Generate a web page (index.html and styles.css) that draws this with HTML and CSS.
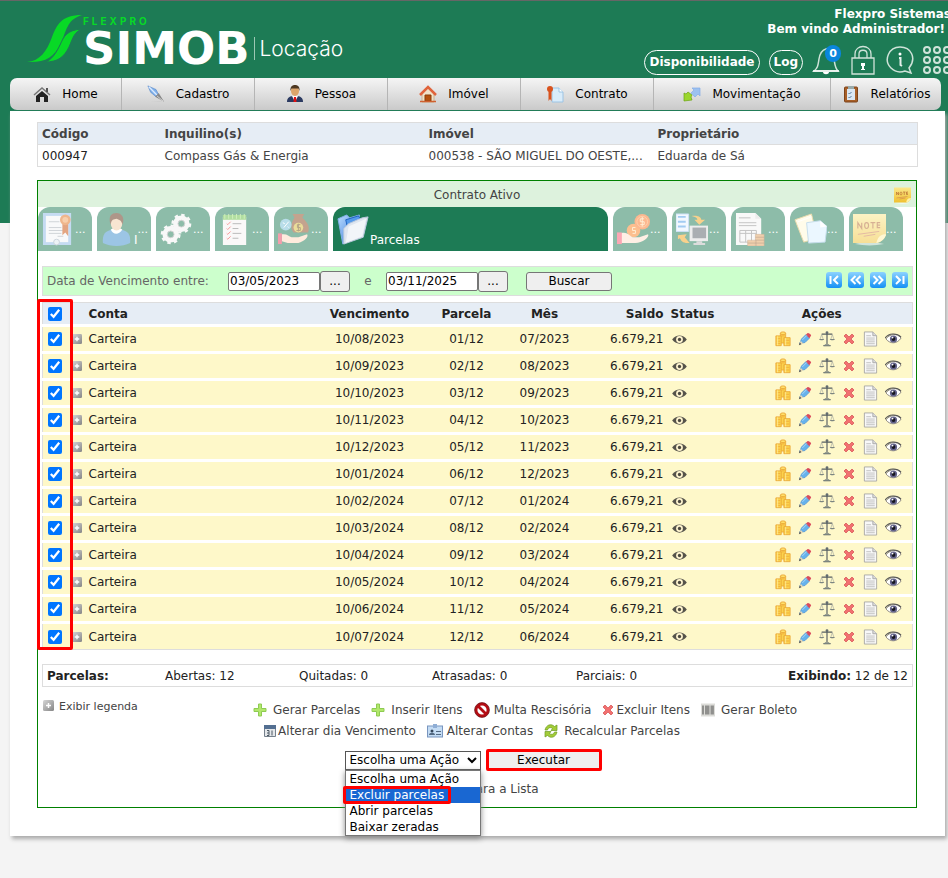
FILE: index.html
```html
<!DOCTYPE html>
<html lang="pt-BR">
<head>
<meta charset="utf-8">
<title>SIMOB Locação - Parcelas</title>
<link rel="stylesheet" href="styles.css">
</head>
<body>
<svg class="sprite" aria-hidden="true">
  <defs>
    <linearGradient id="g-blue" x1="0" y1="0" x2="0" y2="1"><stop offset="0" stop-color="#8cd3ff"/><stop offset="1" stop-color="#1490f5"/></linearGradient>
    <linearGradient id="g-grey" x1="0" y1="0" x2="1" y2="1"><stop offset="0" stop-color="#d6d6d6"/><stop offset="1" stop-color="#858585"/></linearGradient>
    <linearGradient id="g-note" x1="0" y1="0" x2="0" y2="1"><stop offset="0" stop-color="#fbe88b"/><stop offset="1" stop-color="#f0c030"/></linearGradient>
    <linearGradient id="g-folder" x1="0" y1="0" x2="1" y2="1"><stop offset="0" stop-color="#b9dcff"/><stop offset="1" stop-color="#2c6fd6"/></linearGradient>
  </defs>
  <symbol id="home" viewBox="0 0 18 18"><path d="M1 10 9 3l8 7" fill="none" stroke="#777" stroke-width="1.500"/><path d="M13 3h2v4h-2z" fill="#555"/><path d="M3 11l6-5 6 5v6h-4v-5H7v5H3z" fill="#222"/></symbol>
  <symbol id="pen" viewBox="0 0 20 20"><path d="M4 18h14l-4 1z" fill="#ccc"/><path d="M1 1l9 4 3 6-3 2-6-5z" fill="#7fb0ea" stroke="#5c8acb" stroke-width=".7"/><path d="M2 2l9 9" stroke="#dcebff" stroke-width="1.500"/><path d="M9 13l4-4 6 9.500z" fill="#888"/><path d="M11 12l7 6" stroke="#ddd"/></symbol>
  <symbol id="person" viewBox="0 0 18 18"><path d="M1 17c0-5 3-6 8-6s8 1 8 6z" fill="#2b3a61"/><path d="M6 11l3 6 3-6z" fill="#fff"/><path d="M8 12h2l.5 5h-3z" fill="#e01010"/><ellipse cx="9" cy="6" rx="4" ry="5" fill="#dca56b"/><path d="M4.500 6C4 2 6 0 9 0s5 2 4.500 6l-1-2.500h-7z" fill="#4c3720"/></symbol>
  <symbol id="house" viewBox="0 0 18 18"><path d="M3 9l6-6 6 6v8H3z" fill="#f0e2c8" stroke="#c9b18e"/><path d="M1 10l8-8 8 8" fill="none" stroke="#e0643c" stroke-width="2.500"/><path d="M6 10h6v6H6z" fill="#b5520f" stroke="#8b3c08"/><path d="M1 16.500h16" stroke="#d06030" stroke-width="1.500"/></symbol>
  <symbol id="contract" viewBox="0 0 18 18"><path d="M6 3h7l4 4v10H6z" fill="#d9ecfa" stroke="#9cc4e4"/><path d="M13 3v4h4" fill="#fff" stroke="#9cc4e4"/><circle cx="4" cy="4" r="3" fill="#d9531e"/><path d="M2.500 6h3v10l-1.500-2-1.500 2z" fill="#d9531e"/></symbol>
  <symbol id="move" viewBox="0 0 18 18"><path d="M9 3h8v8l-2-2-3 3-4-4 3-3z" fill="#9cc1f0" stroke="#84aee8" stroke-width=".7"/><path d="M1 8l2 1 2-2 4 3-1 2 1 3-8 1z" fill="#9bd62d" stroke="#6ba313" stroke-width=".7"/></symbol>
  <symbol id="clip" viewBox="0 0 16 18"><rect x="1.500" y="2" width="13" height="15" rx="1" fill="#a85f27" stroke="#7c431a"/><path d="M4 4h8v11H4z" fill="#dbe7f2"/><path d="M5 1h6v3H5z" fill="#9aa"/><path d="M5.500 8l1 1 2-2M5.500 12l1 1 2-2" fill="none" stroke="#56789b"/></symbol>

  <symbol id="logo" viewBox="0 0 56 48"><path d="M55 0C34 0 30 10 25 22 20 36 13 46 0 47c18 1 27-5 33-17C40 16 39 5 55 0z" fill="#08d926"/><path d="M55 14C40 15 37 21 33 30c-4 8-8 15-15 17 13 0 19-5 24-15 4-9 5-15 13-18z" fill="#08d926" stroke="#1d7b55"/></symbol>
  <symbol id="bell" viewBox="0 0 28 30"><path d="M2 26c4-3 4-6 5-12 1-6 3-9 7-10s7 4 8 10 1 9 4 12z" fill="none" stroke="#cfe3d9" stroke-width="1.500"/><path d="M1 26h26" stroke="#fff" stroke-width="1.500"/><path d="M11 27h6c0 3-6 3-6 0z" fill="#fff"/></symbol>
  <symbol id="lock" viewBox="0 0 24 30"><path d="M1 13h22v16H1zM4 13V9c0-10 16-10 16 0v4M8 13V9c0-5 8-5 8 0v4" fill="none" stroke="#cfe3d9" stroke-width="1.300"/><path d="M10 18h4v3h-1v3h1v1h-4v-1h1v-3h-1z" fill="#fff"/></symbol>
  <symbol id="info" viewBox="0 0 28 28"><path d="M23 22C31 12 25 1 14 1S-3 14 5 22c5 5 11 4 14 3l6 2z" fill="none" stroke="#cfe3d9" stroke-width="1.500"/><circle cx="14" cy="8" r="1.500" fill="#fff"/><path d="M13 12h1.500v7l1.500 1" fill="none" stroke="#e4f0ea" stroke-width="2"/></symbol>
  <symbol id="apps" viewBox="0 0 28 28"><g fill="none" stroke="#cfe3d9" stroke-width="2"><circle cx="4" cy="4" r="3"/><circle cx="14" cy="4" r="3"/><circle cx="24" cy="4" r="3"/><circle cx="4" cy="14" r="3"/><circle cx="14" cy="14" r="3"/><circle cx="24" cy="14" r="3"/><circle cx="4" cy="24" r="3"/><circle cx="14" cy="24" r="3"/><circle cx="24" cy="24" r="3"/></g></symbol>

  <symbol id="note" viewBox="0 0 34 34"><path d="M2 32c8-2 20-2 30 0-10 2-20 2-30 0z" fill="#fff" opacity=".6"/><path d="M0 1h34v22c-2 4-5 7-9 8H0z" fill="url(#g-note)"/><path d="M34 22c-4 0-8 1-10 9 5-1 9-4 10-9z" fill="#fff0a8"/><path d="M5 16v-6l4 6v-6M12 13a2 3 0 1 0 4 0 2 3 0 1 0-4 0M18 10h5M20.500 10v6M28 10h-3v5h3M25 12.500h3" fill="none" stroke="#b0632c" stroke-width="1.200"/><path d="M5 22l22-3M11 24l12-2" stroke="#c9764a" fill="none"/></symbol>
  <symbol id="t-cert" viewBox="0 0 34 34"><path d="M1 0h29v33H1z" fill="#8db9e6"/><path d="M4 3h23v27H4z" fill="#f3f5f7"/><path d="M7 9h11M7 15h13M7 18h15M7 21h13M16 24h6" stroke="#a0a8b0"/><circle cx="15" cy="30" r="3" fill="#dde8ef" stroke="#9ab"/><path d="M21 10h6v14l-3-4-3 3z" fill="#c94d08"/><circle cx="24" cy="7" r="5.500" fill="#e0701c"/><circle cx="24" cy="7" r="3" fill="#f3a15c"/></symbol>
  <symbol id="t-user" viewBox="0 0 34 34"><path d="M2 31c-1-10 3-14 14-14s15 4 14 14c-8 4-20 4-28 0z" fill="#3c8dcc"/><path d="M10 17c3 6 8 6 12 0l-4-2h-4z" fill="#fff"/><ellipse cx="16" cy="10" rx="6" ry="8" fill="#f2cda5"/><path d="M10 12C7 3 11 0 16 0s9 5 6 12c-1-5-4-5-6-6-3 1-5 0-6 6z" fill="#603015"/></symbol>
  <symbol id="t-gears" viewBox="0 0 34 34"><g fill="none" stroke="#f2f2f2"><circle cx="22" cy="11" r="6" stroke-width="5"/><circle cx="22" cy="11" r="9" stroke-width="2.500" stroke-dasharray="3.500 3.500"/><circle cx="11" cy="22" r="6" stroke-width="5"/><circle cx="11" cy="22" r="9" stroke-width="2.500" stroke-dasharray="3.500 3.500"/></g><g fill="none" stroke="#aaa"><circle cx="22" cy="11" r="3.500"/><circle cx="11" cy="22" r="3.500"/></g></symbol>
  <symbol id="t-list" viewBox="0 0 34 34"><path d="M4 4h24v29H4z" fill="#f6f2f2"/><path d="M4 2h24v5H4z" fill="#66bf44"/><path d="M6 1v5M10 1v5M14 1v5M18 1v5M22 1v5M26 1v5" stroke="#a0e080"/><path d="M8 11l1 1 3-3M8 16l1 1 3-3M8 21l1 1 3-3M8 26l1 1 3-3" fill="none" stroke="#ef3030"/><path d="M14 11h9M14 16h6M14 21h9M14 26h6" stroke="#777"/></symbol>
  <symbol id="t-bag" viewBox="0 0 34 34"><path d="M17 5l-2-4h12l-2 4c6 5 8 10 6 15H16c-4-5-2-11 1-15z" fill="#8a4a20"/><circle cx="21" cy="15" r="5" fill="#d7bd37"/><path d="M23 12h-3v3h3v3h-4M21 11v8" fill="none" stroke="#6d4a11"/><circle cx="8" cy="12" r="6" fill="#74bdd5"/><path d="M6 15l5-6M5 10l2 1M10 14l1 1" stroke="#fff"/><path d="M4 22c5-1 7 2 10 3h7l9-3c2 3-3 7-9 9H10l-6-2z" fill="#ffd8bd"/><path d="M0 21h4v11H0z" fill="#e8405c"/></symbol>
  <symbol id="t-folder" viewBox="0 0 34 34"><path d="M1 6l9-4 3 3 10-3v20l-17 10z" fill="url(#g-folder)" stroke="#83b0e8"/><path d="M9 7l13-4 4 6-15 7z" fill="#549aec" stroke="#1e62c0"/><path d="M7 16l5-5 14-6 6-1-5 21-20 7z" fill="#dfe6f0" stroke="#b9c8dc"/><path d="M12 14l18-8-4 18-17 7z" fill="#fff" opacity=".6"/></symbol>
  <symbol id="t-coins" viewBox="0 0 34 34"><circle cx="17" cy="18" r="7" fill="#fb8122"/><circle cx="26" cy="9" r="8" fill="#fa7423"/><circle cx="26" cy="9" r="5.500" fill="none" stroke="#ffa35b"/><path d="M28 6h-4v3h4v3h-4M26 4v10M19 15h-3v3h3v3h-3" fill="none" stroke="#ffe0ad"/><path d="M4 21c6-2 8 2 12 4h7l9-3c2 3-6 9-13 9H4z" fill="#ffe1cc"/><path d="M0 20h5v12H0z" fill="#f8526c"/></symbol>
  <symbol id="t-sync" viewBox="0 0 34 34"><path d="M0 1h13v18H0z" fill="#e8f3ff" stroke="#9cc4f0"/><path d="M2 4h8M2 9h8M2 14h8" stroke="#4899e6" stroke-width="2"/><path d="M16 3c8-1 10 2 10 4h4l-6 5-5-5h3c0-2-2-3-6-4z" fill="#f3a51b"/><path d="M2 23l9-1-2 3 5 6c-6 0-8-1-10-5l-2 1z" fill="#f3a51b"/><path d="M14 13h19v16H14z" fill="#ddd"/><path d="M17 15h14v11H17z" fill="#586068"/><path d="M21 29h6v2h3v2H18v-2h3z" fill="#bbb"/></symbol>
  <symbol id="t-doc" viewBox="0 0 34 34"><path d="M1 0h20l6 6v27H1z" fill="#f4f4f4"/><path d="M21 0v6h6" fill="#ddd"/><path d="M4 5h12M4 10h18M4 13h18M5 18h17v12H5zM11 18v12M17 18v12M5 21h17" fill="none" stroke="#888"/><g fill="#e2a05b" stroke="#9c6635" stroke-width=".5"><path d="M13 28h9v3h-9zM13 31h9v3h-9zM21 22h9v3h-9zM21 25h9v3h-9zM21 28h9v3h-9zM21 31h9v3h-9z"/></g></symbol>
  <symbol id="t-pages" viewBox="0 0 34 34"><path d="M1 7L18 1l6 25-14 4z" fill="#fffbd6" stroke="#d7b95e"/><path d="M4 9l14-5" stroke="#fff"/><path d="M13 10l14-2 7 6-2 16-17 1z" fill="#d9f1ff" stroke="#8cbcd9"/><path d="M27 8v7l7-1z" fill="#fff"/></symbol>

  <symbol id="plusbox" viewBox="0 0 11 11"><rect width="11" height="11" rx="1.500" fill="url(#g-grey)"/><path d="M5.500 3v5M3 5.500h5" stroke="#fff" stroke-width="1.500"/></symbol>
  <symbol id="eye" viewBox="0 0 18 12"><path d="M1 6c4-6 12-6 16 0-4 6-12 6-16 0z" fill="#55534a"/><circle cx="9" cy="6" r="3.700" fill="#fff5cf"/><circle cx="9" cy="6" r="1.800" fill="#4c4a40"/></symbol>
  <symbol id="coins" viewBox="0 0 18 18"><g fill="#fbd34c" stroke="#eba93a"><path d="M6 2.500h6v11H6z"/><path d="M1 5.500h6v11H1z"/><path d="M10 7.500h7v9h-7z"/></g><path d="M2 8.500h4M2 11.500h4M2 14h4M11 10.500h5M11 13.500h5M7 5.500h4" stroke="#f2ae3c"/><path d="M3 6v10M12 8v8" stroke="#ffeb99"/><ellipse cx="9" cy="2.500" rx="3" ry="1.500" fill="#ffe16a" stroke="#eba93a"/></symbol>
  <symbol id="pencil" viewBox="0 0 16 16"><path d="M2 13l2-5 5-5 4 4-5 5z" fill="#65b2ec" stroke="#5b9cd6"/><path d="M9 3l2-2c2 0 4 2 4 3l-2 3z" fill="#d94b5d"/><path d="M5 9l5-5" stroke="#b2dcfa"/><path d="M2 14l1-4 3 3z" fill="#efdbb2"/><path d="M1 15l1-3 2 2z" fill="#555"/></symbol>
  <symbol id="scale" viewBox="0 0 18 18"><path d="M9 2v13M3 3.500h12M5 16.500h8" stroke="#555d61" stroke-width="1.300"/><path d="M3 4L1 10M3 4l2 6M15 4l-2 6M15 4l2 6" stroke="#a0a59c" stroke-width=".7"/><path d="M0 9h6c-1 2-5 2-6 0zM12 9h6c-1 2-5 2-6 0zM7 15h4l2 2H5z" fill="#7c8580"/><circle cx="9" cy="2" r="1.600" fill="#636c70"/></symbol>
  <symbol id="cross" viewBox="0 0 12 12"><path d="M1 3l2-2 3 3 3-3 2 2-3 3 3 3-2 2-3-3-3 3-2-2 3-3z" fill="#f27070" stroke="#d85a5a" stroke-width=".8"/></symbol>
  <symbol id="doc" viewBox="0 0 15 17"><path d="M1 1h9l4 4v11H1z" fill="#f8f8f8" stroke="#aaaaa6"/><path d="M10 1v4h4" fill="#ddd" stroke="#aaa"/><path d="M3 5h5M3 7.500h9M3 9.500h9M3 11.500h9M3 13.500h9" stroke="#c0c0c0"/></symbol>
  <symbol id="view" viewBox="0 0 18 12"><path d="M1 6c3-5 12-7 16-1-4 6-11 7-16 1z" fill="#fff" stroke="#8a867c"/><path d="M0 5c4-5 12-6 17-1" fill="none" stroke="#555" stroke-width="1.200"/><circle cx="9" cy="6" r="3.800" fill="#62628a"/><circle cx="9" cy="6" r="2" fill="#171720"/><circle cx="8" cy="4.500" r="1" fill="#fff"/></symbol>
  <symbol id="first" viewBox="0 0 16 16"><rect width="16" height="16" rx="3" fill="url(#g-blue)"/><path d="M4.500 4v8M12 4L8 8l4 4" fill="none" stroke="#fff" stroke-width="2"/></symbol>
  <symbol id="prev" viewBox="0 0 16 16"><rect width="16" height="16" rx="3" fill="url(#g-blue)"/><path d="M7.500 4l-4 4 4 4M12.500 4l-4 4 4 4" fill="none" stroke="#fff" stroke-width="2"/></symbol>
  <symbol id="next" viewBox="0 0 16 16"><rect width="16" height="16" rx="3" fill="url(#g-blue)"/><path d="M3.500 4l4 4-4 4M8.500 4l4 4-4 4" fill="none" stroke="#fff" stroke-width="2"/></symbol>
  <symbol id="last" viewBox="0 0 16 16"><rect width="16" height="16" rx="3" fill="url(#g-blue)"/><path d="M11.500 4v8M4 4l4 4-4 4" fill="none" stroke="#fff" stroke-width="2"/></symbol>
  <symbol id="add" viewBox="0 0 14 14"><path d="M5.500 1h3v4.500H13v3H8.500V13h-3V8.500H1v-3h4.500z" fill="#b2e86c" stroke="#8ecb52"/></symbol>
  <symbol id="ban" viewBox="0 0 16 16"><circle cx="8" cy="8" r="6" fill="#fff" stroke="#b40d14" stroke-width="2.800"/><path d="M4 4l8 8" stroke="#b40d14" stroke-width="2.800"/><circle cx="8" cy="8" r="7.400" fill="none" stroke="#641014" stroke-width=".7"/></symbol>
  <symbol id="bars" viewBox="0 0 14 13"><path d="M0 0h14v13H0z" fill="#dcdcd8"/><path d="M2 2v9M5 2v9M7 2v9M11 2v9" stroke="#444"/><path d="M9 2v9M12.500 2v9" stroke="#777" stroke-width=".7"/></symbol>
  <symbol id="cal" viewBox="0 0 12 12"><path d="M.500 1h11v10.500H.500z" fill="#e4e7ea" stroke="#75808b"/><path d="M0 0h12v4H0z" fill="#536f91"/><path d="M3 5.500h2v5H3M3 8h2M8 5.500v5" fill="none" stroke="#4d5964"/></symbol>
  <symbol id="card" viewBox="0 0 16 14"><rect x=".500" y="2" width="15" height="11" fill="#c4dcf4" stroke="#7895bf"/><path d="M6 0h4v4H6z" fill="#8faed5"/><circle cx="5" cy="7" r="1.500" fill="#33465c"/><path d="M2 11c0-3 6-3 6 0zM9 7h5v1H9zM9 10h5v1H9z" fill="#526982"/></symbol>
  <symbol id="recycle" viewBox="0 0 14 14"><path d="M1 6C2 1 7-1 10.500 2.500L13 1v5.500H7L8.500 4.500C7 3 4 3.500 3.500 6zM13 8c-1 5-6 7-9.500 3.500L1 13V7.500h6L5.500 9.500C7 11 10 10.500 10.500 8z" fill="#a3cc38" stroke="#6b9b22" stroke-width=".7"/></symbol>
</svg>

<header class="header">
  <div class="brand">
    <svg class="brand-mark"><use href="#logo"/></svg>
    <div class="brand-text"><span class="brand-small">FLEXPRO</span><span class="brand-name">SIMOB</span></div>
    <span class="brand-module">Locação</span>
  </div>
  <div class="account">
    <div class="account-company">Flexpro Sistemas</div>
    <div class="account-user">Bem vindo Administrador!</div>
    <div class="tools">
      <button class="pill" type="button">Disponibilidade</button>
      <button class="pill" type="button">Log</button>
      <a class="tool tool-bell" href="#" aria-label="Notificações"><svg><use href="#bell"/></svg><span class="badge">0</span></a>
      <a class="tool tool-lock" href="#" aria-label="Bloquear"><svg><use href="#lock"/></svg></a>
      <a class="tool" href="#" aria-label="Informações"><svg><use href="#info"/></svg></a>
      <a class="tool tool-apps" href="#" aria-label="Aplicativos"><svg><use href="#apps"/></svg></a>
    </div>
  </div>
</header>

<nav class="menu">
  <a href="#"><svg><use href="#home"/></svg>Home</a>
  <a href="#"><svg><use href="#pen"/></svg>Cadastro</a>
  <a href="#"><svg><use href="#person"/></svg>Pessoa</a>
  <a href="#"><svg><use href="#house"/></svg>Imóvel</a>
  <a href="#"><svg><use href="#contract"/></svg>Contrato</a>
  <a href="#"><svg><use href="#move"/></svg>Movimentação</a>
  <a href="#"><svg><use href="#clip"/></svg>Relatórios</a>
</nav>

<main class="page">
  <table class="summary">
    <thead><tr><th class="s-code">Código</th><th class="s-tenant">Inquilino(s)</th><th class="s-place">Imóvel</th><th>Proprietário</th></tr></thead>
    <tbody><tr><td>000947</td><td>Compass Gás &amp; Energia</td><td>000538 - SÃO MIGUEL DO OESTE,...</td><td>Eduarda de Sá</td></tr></tbody>
  </table>

  <section class="contract">
    <div class="contract-head"><span>Contrato Ativo</span><svg><use href="#note"/></svg></div>
    <div class="tabs">
      <button type="button" class="tab"><svg><use href="#t-cert"/></svg><span>...</span></button>
      <button type="button" class="tab"><svg><use href="#t-user"/></svg><b>I</b><span>...</span></button>
      <button type="button" class="tab"><svg><use href="#t-gears"/></svg><span>...</span></button>
      <button type="button" class="tab"><svg><use href="#t-list"/></svg><span>...</span></button>
      <button type="button" class="tab"><svg><use href="#t-bag"/></svg><span>...</span></button>
      <button type="button" class="tab tab-active"><svg><use href="#t-folder"/></svg><b>Parcelas</b></button>
      <button type="button" class="tab"><svg><use href="#t-coins"/></svg><span>...</span></button>
      <button type="button" class="tab"><svg><use href="#t-sync"/></svg><span>...</span></button>
      <button type="button" class="tab"><svg><use href="#t-doc"/></svg><span>...</span></button>
      <button type="button" class="tab"><svg><use href="#t-pages"/></svg><span>...</span></button>
      <button type="button" class="tab"><svg><use href="#note"/></svg><span>...</span></button>
    </div>

    <form class="filter">
      <label class="filter-label" for="from">Data de Vencimento entre:</label>
      <input id="from" class="date" type="text" value="03/05/2023"><button class="btn btn-pick" type="button" aria-label="Escolher data inicial">...</button>
      <label class="filter-and" for="to">e</label>
      <input id="to" class="date" type="text" value="03/11/2025"><button class="btn btn-pick" type="button" aria-label="Escolher data final">...</button>
      <button class="btn btn-search" type="button">Buscar</button>
      <span class="pager">
        <a href="#" aria-label="Primeira"><svg><use href="#first"/></svg></a>
        <a href="#" aria-label="Anterior"><svg><use href="#prev"/></svg></a>
        <a href="#" aria-label="Próxima"><svg><use href="#next"/></svg></a>
        <a href="#" aria-label="Última"><svg><use href="#last"/></svg></a>
      </span>
    </form>

    <div class="list">
      <table class="grid">
        <thead>
          <tr>
            <th class="c-check"><input type="checkbox" checked aria-label="Selecionar todas"></th>
            <th class="c-plus"></th>
            <th class="c-account">Conta</th>
            <th class="c-due">Vencimento</th>
            <th class="c-part">Parcela</th>
            <th class="c-month">Mês</th>
            <th class="c-value">Saldo</th>
            <th class="c-status">Status</th>
            <th class="c-actions">Ações</th>
          </tr>
        </thead>
        <tbody id="rows"></tbody>
      </table>
      <div class="mark mark-checks"></div>
    </div>

    <div class="totals">
      <b>Parcelas:</b><span>Abertas: 12</span><span>Quitadas: 0</span><span>Atrasadas: 0</span><span>Parciais: 0</span><span class="showing"><b>Exibindo:</b> 12 de 12</span>
    </div>

    <div class="footer">
      <a class="legend" href="#"><svg><use href="#plusbox"/></svg>Exibir legenda</a>
      <div class="links">
        <div class="links-row links-main">
          <a href="#"><svg class="i14"><use href="#add"/></svg>Gerar Parcelas</a>
          <a href="#"><svg class="i14"><use href="#add"/></svg>Inserir Itens</a>
          <a class="tight" href="#"><svg class="i16"><use href="#ban"/></svg>Multa Rescisória</a>
          <a class="snug" href="#"><svg class="i12"><use href="#cross"/></svg>Excluir Itens</a>
          <a href="#"><svg class="i14"><use href="#bars"/></svg>Gerar Boleto</a>
        </div>
        <div class="links-row links-more">
          <a class="snug" href="#"><svg class="i12"><use href="#cal"/></svg>Alterar dia Vencimento</a>
          <a class="tight" href="#"><svg class="i16"><use href="#card"/></svg>Alterar Contas</a>
          <a href="#"><svg class="i14"><use href="#recycle"/></svg>Recalcular Parcelas</a>
        </div>
      </div>
    </div>

    <div class="actions">
      <div class="picker">
        <select aria-label="Ação"><option>Escolha uma Ação</option><option>Excluir parcelas</option><option>Abrir parcelas</option><option>Baixar zeradas</option></select>
        <ul class="menu-list">
          <li>Escolha uma Ação</li>
          <li class="chosen">Excluir parcelas<span class="mark mark-option"></span></li>
          <li>Abrir parcelas</li>
          <li>Baixar zeradas</li>
        </ul>
      </div>
      <button class="run" type="button">Executar</button>
    </div>
    <a class="back" href="#">Voltar para a Lista</a>
  </section>
</main>
<script src="script.js"></script>
</body>
</html>
```
FILE: styles.css
```css
* { box-sizing: border-box; }

body {
  margin: 0;
  min-height: 100vh;
  overflow-x: hidden;
  border-top: 1px solid #666;
  background: linear-gradient(#1d7b55, #1d7b55) 0 0 / 100% 223px no-repeat #f4f4f4;
  font-family: "DejaVu Sans", sans-serif;
  font-size: 12px;
  color: #444;
}

a { color: inherit; text-decoration: none; }
svg { display: block; flex: none; }
button, input, select { font: inherit; color: #000; }
table { border-collapse: collapse; table-layout: fixed; }

.sprite { position: absolute; width: 0; height: 0; }

/* Header */
.header {
  display: flex;
  justify-content: space-between;
  height: 77px;
  color: #fff;
}

.brand { display: flex; padding: 14px 0 0 27px; font-family: Inter, sans-serif; }
.brand-mark { width: 56px; height: 48px; }
.brand-text { display: flex; flex-direction: column; }
.brand-small { font-size: 10px; line-height: 12px; font-weight: 700; letter-spacing: 3px; color: #08d926; }
.brand-name { font-family: "DejaVu Sans", sans-serif; font-size: 45px; line-height: 44px; font-weight: 700; }
.brand-module {
  align-self: flex-start;
  margin: 22px 0 0 4px;
  padding-left: 5px;
  border-left: 1px solid #9cc7b3;
  font-size: 21px;
  line-height: 23px;
  font-weight: 300;
}

.account { padding-top: 6px; font-weight: 700; line-height: 15px; text-align: right; }
.account-company { margin-right: -3px; }
.account-user { margin-right: 3px; }
.tools { display: flex; align-items: center; gap: 9px; margin: 8px -3px 0 0; }
.pill {
  height: 25px;
  margin-top: 4px;
  padding: 0 4px;
  border: 1px solid #fff;
  border-radius: 13px;
  background: transparent;
  color: #fff;
  font-weight: 700;
}
.tool { position: relative; }
.tool svg { width: 28px; height: 28px; }
.tool-bell svg, .tool-lock svg { height: 30px; }
.tool-lock { margin: 0 2px 0 2px; }
.tool-lock svg { width: 24px; }
.badge {
  position: absolute;
  top: 0;
  right: -1px;
  width: 16px;
  height: 17px;
  border-radius: 9px;
  background: #0a86dc;
  font-size: 11px;
  line-height: 17px;
  text-align: center;
}

/* Main menu */
.menu {
  display: grid;
  grid-template-columns: 112fr 133fr 133fr 133fr 133fr 177fr 110fr;
  margin: 0 7px 1px 10px;
  border-radius: 7px;
  overflow: hidden;
  background: linear-gradient(#f5f5f5, #cacaca);
  color: #000;
}
.menu a {
  display: flex;
  align-items: center;
  justify-content: center;
  gap: 11px;
  height: 32px;
  border-right: 1px solid #b5b5b5;
}
.menu a:last-child { border-right: 0; }
.menu svg { width: 18px; height: 18px; }

/* Page sheet */
.page {
  margin: 0 3px 0 10px;
  padding: 11px 27px 28px 27px;
  background: #fff;
  box-shadow: 2px 3px 4px #aaa;
}

.summary { width: 100%; border: 1px solid #ddd; }
.summary th, .summary td { padding: 0 4px; height: 22px; text-align: left; white-space: nowrap; }
.summary thead { background: #e6edf5; border-bottom: 1px solid #ddd; }
.summary td:first-child { color: #222; }
.s-code { width: 123px; }
.s-tenant { width: 264px; }
.s-place { width: 229px; }

.contract { margin: 13px 1px 0 0; border: 1px solid #008000; }
.contract-head {
  position: relative;
  height: 26px;
  line-height: 28px;
  background: #ddf2dd;
  text-align: center;
}
.contract-head svg { position: absolute; right: 5px; top: 6px; width: 17px; height: 17px; }

.tabs { display: flex; gap: 5px; padding-right: 13px; }
.tab {
  display: flex;
  align-items: center;
  flex: none;
  width: 54px;
  height: 44px;
  padding: 0 0 0 4px;
  border: 0;
  border-radius: 12px 12px 0 0;
  background: #1d7b55;
  color: #fff;
  font-size: 11px;
  opacity: .5;
}
.tab svg { width: 33px; height: 33px; }
.tab b { align-self: flex-end; margin: 0 0 4px 0; font-size: 12px; font-weight: 400; }
.tab-active { flex: 1; opacity: 1; }

.filter {
  display: flex;
  align-items: center;
  height: 30px;
  margin: 15px 3px 6px 4px;
  padding: 0 4px;
  border: 1px solid #ddd;
  background: #cfc;
  color: #666;
}
.filter-label { width: 181px; }
.filter-and { width: 36px; text-align: center; }
.date { width: 92px; height: 19px; padding: 0 1px; border: 1px solid #767676; border-radius: 2px; background: #fff; }
.btn { height: 19px; padding: 0; border: 1px solid #767676; border-radius: 3px; background: #efefef; }
.btn-pick { width: 30px; height: 21px; }
.btn-search { width: 86px; margin-left: 18px; }
.pager { display: flex; gap: 6px; margin: 0 0 3px auto; }
.pager svg { width: 16px; height: 16px; }

/* Instalments */
.list { position: relative; margin: 0 3px 0 4px; }
.grid { width: 100%; border: 1px solid #ddd; color: #222; }
.grid th, .grid td { padding: 0; height: 27px; text-align: center; white-space: nowrap; }
.grid th { height: 23px; background: #e6edf5; }
.grid td { background: #fef8c9; border-top: 3px solid #fff; }
.grid input { display: block; width: 14px; height: 14px; margin: 0 0 0 5px; }
.c-check { width: 29px; }
.c-plus { width: 17px; }
.c-due { width: 116px; }
.c-part { width: 78px; }
.c-month { width: 78px; }
.c-value { width: 80px; }
.c-status { width: 68px; }
.c-actions { width: 181px; }
.grid .c-account { text-align: left; }
.grid .c-value { text-align: right; }
.grid .c-status { padding-left: 7px; text-align: left; }
.c-plus svg { width: 10px; height: 10px; }
.c-status svg { width: 17px; height: 11px; }
.row-actions { display: flex; align-items: center; justify-content: flex-end; gap: 7px; padding-right: 10px; }
.row-actions svg { width: 16px; height: 16px; }
.row-actions svg.r-pencil { width: 14px; height: 14px; }
.row-actions svg.r-cross { width: 12px; height: 12px; margin: 0 1px; }
.row-actions svg.r-doc { width: 15px; }
.row-actions svg.r-view { width: 17px; height: 12px; }

.mark { position: absolute; border: 3px solid #f00; border-radius: 2px; pointer-events: none; }
.mark-checks { left: -5px; top: -3px; bottom: 0; width: 36px; }

.totals {
  display: grid;
  grid-template-columns: 118px 134px 133px 144px 1fr auto;
  align-items: center;
  height: 23px;
  margin: 14px 3px 0 4px;
  padding: 0 4px;
  border: 1px solid #ddd;
  color: #222;
}

.footer { position: relative; padding-top: 12px; }
.legend { position: absolute; left: 5px; top: 13px; display: flex; gap: 5px; font-size: 11px; line-height: 14px; }
.legend svg { width: 11px; height: 11px; }
.links-row { display: flex; justify-content: center; gap: 11px; height: 21px; }
.links-main { padding-left: 96px; }
.links-more { padding-right: 10px; }
.links a { display: flex; align-items: center; gap: 6px; }
.links a.tight { gap: 4px; }
.links a.snug { gap: 2px; }
.i12 { width: 12px; height: 12px; }
.i14 { width: 14px; height: 14px; }
.i16 { width: 16px; height: 16px; }

.actions { display: flex; align-items: center; justify-content: center; gap: 5px; margin: 8px 8px 0 0; }
.picker { position: relative; width: 136px; }
.picker select { display: block; width: 100%; height: 19px; padding: 0; border: 1px solid #555; border-radius: 0; background: #fff; }
.menu-list {
  position: absolute;
  left: 0;
  right: 0;
  top: 19px;
  margin: 0;
  padding: 0;
  border: 1px solid #767676;
  background: #fff;
  box-shadow: 0 2px 6px #888;
  color: #000;
  line-height: 16px;
  list-style: none;
}
.menu-list li { position: relative; padding-left: 4px; }
.menu-list .chosen { background: #1967d2; color: #fff; }
.mark-option { left: -3px; top: -1px; bottom: -1px; width: 108px; }
.run { width: 116px; height: 22px; padding: 0; border: 3px solid #f00; border-radius: 2px; background: #efefef; }
.back { display: block; margin: 10px 0; padding-left: 14px; line-height: 16px; text-align: center; }
```
FILE: script.js
```js
const first = { due: 8, year: 2023 };
const actions = ['coins', 'pencil', 'scale', 'cross', 'doc', 'view'];
const pad = (n) => String(n).padStart(2, '0');
const icon = (name) => `<svg class="r-${name}"><use href="#${name}"/></svg>`;
const month = (offset) => {
  const index = first.due - 1 + offset;
  return `${pad((index % 12) + 1)}/${first.year + Math.floor(index / 12)}`;
};

let html = '';
for (let i = 0; i < 12; i += 1) {
  html += `<tr>
    <td><input type="checkbox" checked aria-label="Selecionar parcela ${i + 1}"></td>
    <td class="c-plus">${icon('plusbox')}</td>
    <td class="c-account">Carteira</td>
    <td>10/${month(i)}</td>
    <td>${pad(i + 1)}/12</td>
    <td>${month(i - 1)}</td>
    <td class="c-value">6.679,21</td>
    <td class="c-status">${icon('eye')}</td>
    <td><span class="row-actions">${actions.map(icon).join('')}</span></td>
  </tr>`;
}
document.getElementById('rows').innerHTML = html;
```
